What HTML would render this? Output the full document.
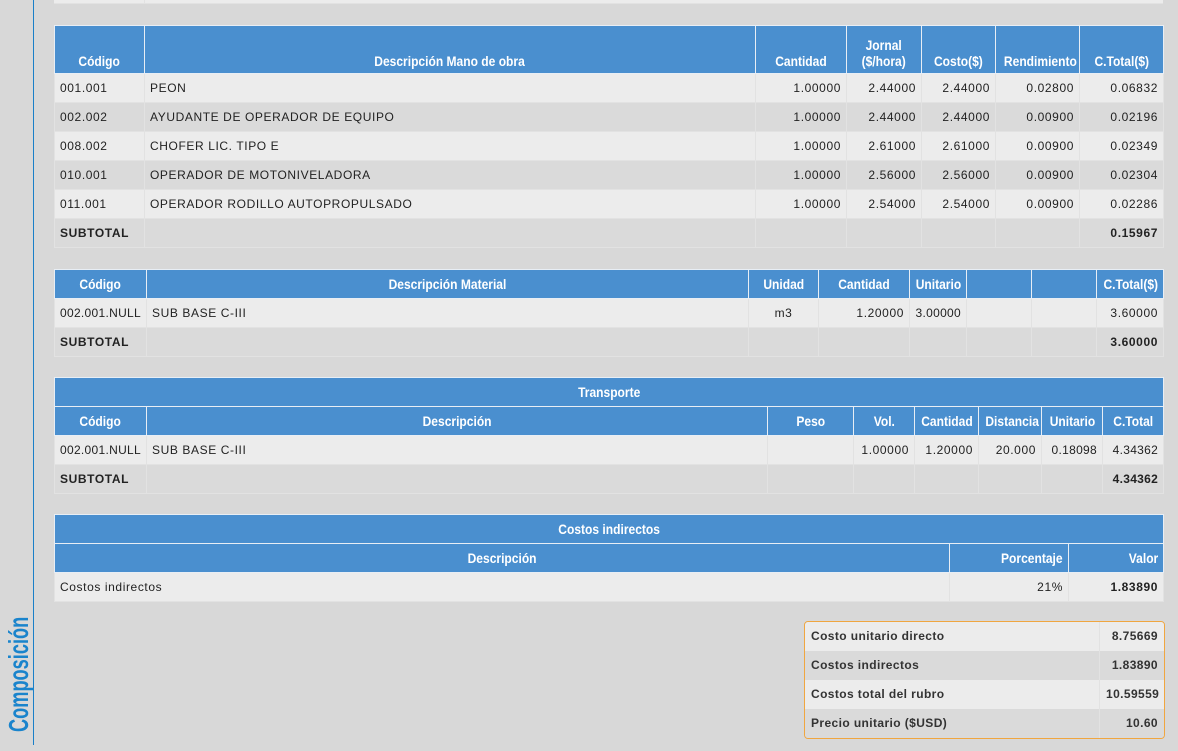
<!DOCTYPE html>
<html><head><meta charset="utf-8"><style>
body{margin:0;width:1178px;height:751px;background:#d8d8d8;position:relative;overflow:hidden;font-family:"Liberation Sans",sans-serif}
.vl{position:absolute;left:33px;top:0;width:1px;height:745px;background:#1a7fc8}
.side{position:absolute;left:-41px;top:679px;width:120px;height:28px;transform:rotate(-90deg) scaleX(0.65);color:#1a84cc;font:bold 28px "Liberation Sans",sans-serif;text-align:center;line-height:28px;white-space:nowrap}
table{position:absolute;left:54px;width:1109px;border-collapse:collapse;table-layout:fixed}
td,th{border:1px solid #e2e2e2;padding:0 5px;height:28px;font-size:12px;color:#222;white-space:nowrap;overflow:hidden;letter-spacing:.6px}
th{background:#4a8fcf;color:#fff;font:bold 14px "Liberation Sans",sans-serif;border:1px solid #e8eef5;vertical-align:bottom;padding:0 2px 4px;letter-spacing:0;text-align:center;overflow:visible}
th span{display:inline-block;transform:scaleX(.86);transform-origin:center}
th.rt span{transform-origin:right}
th.t{vertical-align:middle;padding-bottom:0}
tr.a td{background:#ececec}tr.b td{background:#dadada}
.r{text-align:right}.c{text-align:center}.bd{font-weight:bold}
.sum{position:absolute;left:804px;top:621px;width:359px;border:1px solid #f0a640;border-radius:4px;overflow:hidden}
.sum div{height:29px;display:flex;font-size:12px;font-weight:bold;color:#333;letter-spacing:.4px}
.sum span{line-height:29px;padding:0 6px}
.sum span:first-child{flex:1;border-right:1px solid #e2e2e2}
.sum span:last-child{width:52px;text-align:right}
</style></head><body>
<div class="vl"></div>
<div class="side">Composición</div>
<div style="position:absolute;left:54px;top:0;width:1109px;height:3px;background:#ececec;border-bottom:1px solid #e2e2e2"></div>
<div style="position:absolute;left:144px;top:0;width:1px;height:4px;background:#e2e2e2"></div>

<table style="top:25px">
<colgroup><col style="width:90px"><col style="width:611px"><col style="width:91px"><col style="width:75px"><col style="width:74px"><col style="width:84px"><col style="width:84px"></colgroup>
<tr><th style="height:43px"><span>Código</span></th><th><span>Descripción Mano de obra</span></th><th><span>Cantidad</span></th><th><span>Jornal<br>($/hora)</span></th><th><span>Costo($)</span></th><th><span>Rendimiento</span></th><th><span>C.Total($)</span></th></tr>
<tr class="a"><td>001.001</td><td>PEON</td><td class="r">1.00000</td><td class="r">2.44000</td><td class="r">2.44000</td><td class="r">0.02800</td><td class="r">0.06832</td></tr>
<tr class="b"><td>002.002</td><td>AYUDANTE DE OPERADOR DE EQUIPO</td><td class="r">1.00000</td><td class="r">2.44000</td><td class="r">2.44000</td><td class="r">0.00900</td><td class="r">0.02196</td></tr>
<tr class="a"><td>008.002</td><td>CHOFER LIC. TIPO E</td><td class="r">1.00000</td><td class="r">2.61000</td><td class="r">2.61000</td><td class="r">0.00900</td><td class="r">0.02349</td></tr>
<tr class="b"><td>010.001</td><td>OPERADOR DE MOTONIVELADORA</td><td class="r">1.00000</td><td class="r">2.56000</td><td class="r">2.56000</td><td class="r">0.00900</td><td class="r">0.02304</td></tr>
<tr class="a"><td>011.001</td><td>OPERADOR RODILLO AUTOPROPULSADO</td><td class="r">1.00000</td><td class="r">2.54000</td><td class="r">2.54000</td><td class="r">0.00900</td><td class="r">0.02286</td></tr>
<tr class="b"><td class="bd">SUBTOTAL</td><td></td><td></td><td></td><td></td><td></td><td class="r bd">0.15967</td></tr>
</table>

<table style="top:269px">
<colgroup><col style="width:92px"><col style="width:602px"><col style="width:70px"><col style="width:91px"><col style="width:57px"><col style="width:65px"><col style="width:65px"><col style="width:67px"></colgroup>
<tr><th class="t"><span>Código</span></th><th class="t"><span>Descripción Material</span></th><th class="t"><span>Unidad</span></th><th class="t"><span>Cantidad</span></th><th class="t"><span>Unitario</span></th><th class="t"></th><th class="t"></th><th class="t"><span>C.Total($)</span></th></tr>
<tr class="a"><td style="letter-spacing:.3px">002.001.NULL</td><td>SUB BASE C-III</td><td class="c">m3</td><td class="r">1.20000</td><td class="r" style="letter-spacing:.3px">3.00000</td><td></td><td></td><td class="r">3.60000</td></tr>
<tr class="b"><td class="bd">SUBTOTAL</td><td></td><td></td><td></td><td></td><td></td><td></td><td class="r bd">3.60000</td></tr>
</table>

<table style="top:377px">
<colgroup><col style="width:92px"><col style="width:621px"><col style="width:86px"><col style="width:61px"><col style="width:64px"><col style="width:63px"><col style="width:61px"><col style="width:61px"></colgroup>
<tr><th class="t" colspan="8"><span>Transporte</span></th></tr>
<tr><th class="t"><span>Código</span></th><th class="t"><span>Descripción</span></th><th class="t"><span>Peso</span></th><th class="t"><span>Vol.</span></th><th class="t"><span>Cantidad</span></th><th class="t"><span>Distancia</span></th><th class="t"><span>Unitario</span></th><th class="t"><span>C.Total</span></th></tr>
<tr class="a"><td style="letter-spacing:.3px">002.001.NULL</td><td>SUB BASE C-III</td><td></td><td class="r">1.00000</td><td class="r">1.20000</td><td class="r">20.000</td><td class="r" style="letter-spacing:.3px">0.18098</td><td class="r" style="letter-spacing:.3px">4.34362</td></tr>
<tr class="b"><td class="bd">SUBTOTAL</td><td></td><td></td><td></td><td></td><td></td><td></td><td class="r bd" style="letter-spacing:.3px">4.34362</td></tr>
</table>

<table style="top:514px">
<colgroup><col style="width:895px"><col style="width:119px"><col style="width:95px"></colgroup>
<tr><th class="t" colspan="3"><span>Costos indirectos</span></th></tr>
<tr><th class="t"><span>Descripción</span></th><th class="t rt" style="text-align:right;padding-right:5px"><span>Porcentaje</span></th><th class="t rt" style="text-align:right;padding-right:5px"><span>Valor</span></th></tr>
<tr class="a"><td>Costos indirectos</td><td class="r">21%</td><td class="r bd">1.83890</td></tr>
</table>

<div class="sum">
<div style="background:#ececec"><span>Costo unitario directo</span><span>8.75669</span></div>
<div style="background:#dadada"><span>Costos indirectos</span><span>1.83890</span></div>
<div style="background:#ececec"><span>Costos total del rubro</span><span>10.59559</span></div>
<div style="background:#dadada"><span>Precio unitario ($USD)</span><span>10.60</span></div>
</div>
</body></html>
